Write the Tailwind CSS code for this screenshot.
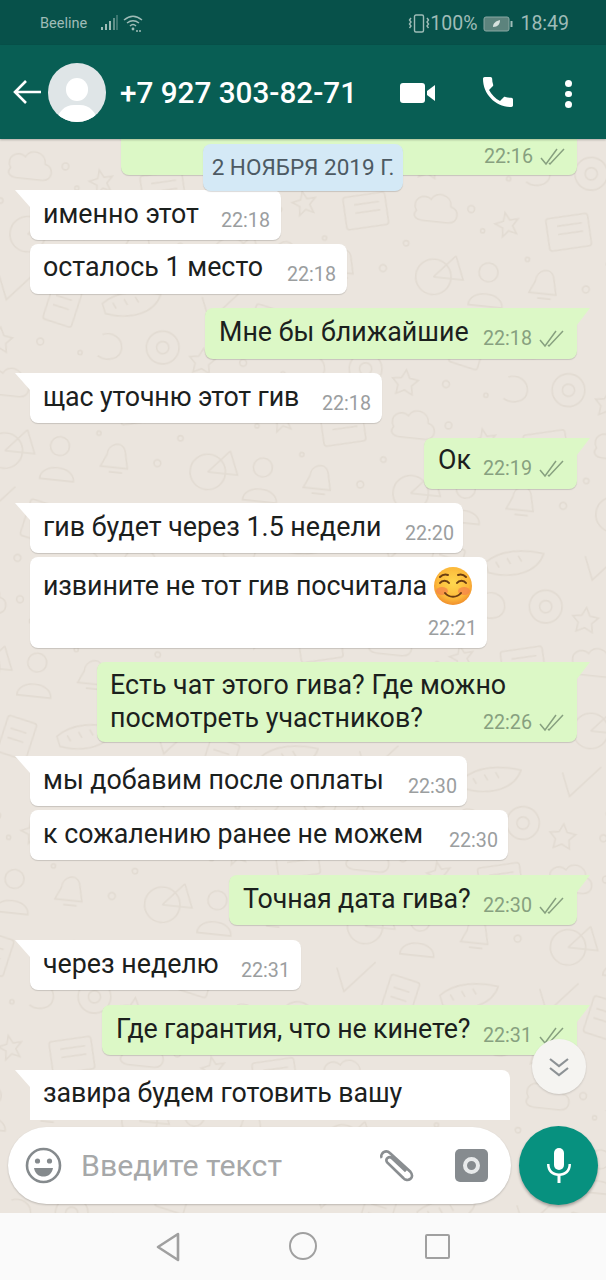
<!DOCTYPE html>
<html><head><meta charset="utf-8">
<script src="https://cdn.jsdelivr.net/npm/@tailwindcss/browser@4"></script>
</head>
<body class="m-0">
<div class="relative flex h-[1280px] w-[606px] flex-col overflow-hidden bg-[#ebe5de] font-['Roboto',sans-serif] text-[26.8px] text-[#1b201d]">

  <!-- doodle wallpaper -->
  <svg class="absolute left-0 top-[139px] h-[1074px] w-[606px]" viewBox="0 0 606 1074" fill="none">
    <defs>
      <pattern id="d" width="300" height="320" patternUnits="userSpaceOnUse" patternTransform="scale(0.68) rotate(6)">
        <g stroke="#e2dbd2" stroke-width="2.400" fill="none">
          <path d="M20 40c-10-14 8-28 20-18 6-14 30-10 30 8 14 2 14 24-2 24H30c-10 0-16-6-10-14z"/>
          <circle cx="100" cy="30" r="5"/><circle cx="120" cy="60" r="3"/><circle cx="10" cy="90" r="4"/>
          <path d="M150 30l8 10 12-3-7 11 7 11-12-3-8 10-1-13-12-5 12-5z"/>
          <rect x="215" y="25" width="62" height="48" rx="4" transform="rotate(-14 246 49)"/>
          <path d="M228 42l36-9M231 54l36-9"/>
          <circle cx="55" cy="135" r="26"/><path d="M55 135l30-34M55 135h44l-14-34"/>
          <circle cx="135" cy="120" r="14"/><path d="M110 170c0-24 50-24 50 0z"/>
          <path d="M205 125c0-16 20-24 26-8l6 26h-40zM210 150h20"/>
          <circle cx="280" cy="130" r="5"/><circle cx="190" cy="95" r="3"/>
          <path d="M20 200l14 34 42-48" />
          <rect x="95" y="205" width="44" height="56" rx="4" transform="rotate(12 117 233)"/>
          <path d="M106 220l24 5M103 234l24 5"/>
          <path d="M175 225c20-22 56-26 84-22-6 28-40 42-78 36z"/><path d="M190 222l6 8M206 215l6 8M222 210l6 8"/>
          <circle cx="270" cy="280" r="24"/><circle cx="270" cy="280" r="9"/>
          <path d="M30 275l6 12 13 2-9 9 2 13-12-6-12 6 2-13-9-9 13-2z"/>
          <circle cx="90" cy="290" r="5"/><circle cx="150" cy="300" r="3"/>
          <path d="M180 270c14-6 30 2 30 18s-20 22-34 14"/>
        </g>
      </pattern>
    </defs>
    <rect width="606" height="1074" fill="url(#d)"/>
  </svg>

  <!-- status bar -->
  <div class="relative flex h-[45px] shrink-0 items-center justify-between bg-[#07514a] pl-[40px] pr-[37px] pt-[2px] text-[#9fbcb7]">
    <div class="flex items-center">
      <span class="text-[14.500px]">Beeline</span>
      <svg class="ml-[14px]" width="42" height="20" viewBox="0 0 42 20" fill="none">
        <g fill="#9fbcb7"><rect x="0" y="13" width="2" height="3"/><rect x="4" y="10" width="2" height="6"/><rect x="8" y="7" width="2" height="9"/><rect x="12" y="4" width="2" height="12" opacity=".6"/><rect x="15" y="1" width="2" height="15" opacity=".35"/></g>
        <g stroke="#9fbcb7" stroke-width="1.500" fill="none"><path d="M23 6c6-5 12-5 18 0"/><path d="M26 9c4-3 8-3 12 0"/><path d="M29 12c2-2 4-2 6 0"/></g>
        <g fill="#9fbcb7"><circle cx="32" cy="15" r="1.400"/><circle cx="36" cy="17" r="1"/><circle cx="39" cy="17" r="1"/></g>
      </svg>
    </div>
    <div class="flex items-center text-[19.500px]">
      <svg width="22" height="20" viewBox="0 0 22 20" fill="none" stroke="#9fbcb7" stroke-width="1.400"><rect x="6.500" y="1" width="9" height="17" rx="1.500"/><path d="M3 4l-1.500 2 1.500 2-1.500 2 1.500 2-1.500 2M19 4l1.500 2-1.500 2 1.500 2-1.500 2 1.500 2"/></svg>
      <span>100%</span>
      <svg class="ml-[6px]" width="30" height="16" viewBox="0 0 30 16"><rect x="1" y="1" width="25" height="14" rx="2" fill="#5c837d" stroke="#8aa9a4"/><rect x="27.500" y="5" width="2" height="6" fill="#9fbcb7"/><path d="M10 11c0-4 3-6 7-7 0 4-2 7-7 7z" fill="#d7e2df"/></svg>
      <span class="ml-[7px]">18:49</span>
    </div>
  </div>

  <!-- header -->
  <div class="relative z-20 flex h-[94px] shrink-0 items-center bg-[#085e54] text-white shadow-[0_1px_2px_rgba(0,0,0,0.25)]">
    <svg class="ml-[13px]" width="28" height="28" viewBox="0 0 28 28" fill="none" stroke="#fff" stroke-width="2.600"><path d="M28 14H2M13 3L2 14l11 11"/></svg>
    <div class="relative ml-[7px] h-[59px] w-[58px] overflow-hidden rounded-full bg-[#dfe5e7]">
      <div class="absolute left-[18px] top-[15px] h-[23px] w-[22px] rounded-full bg-white"></div>
      <div class="absolute left-[9px] top-[42px] h-[34px] w-[40px] rounded-full bg-white"></div>
    </div>
    <span class="ml-[14px] mt-[1px] text-[29.700px] font-medium leading-none">+7 927 303-82-71</span>
    <svg class="absolute left-[400px] top-[38px]" width="36" height="20" viewBox="0 0 36 20" fill="#fff"><rect x="0" y="0" width="25" height="20" rx="3"/><path d="M27 8l8-6v16l-8-6z"/></svg>
    <svg class="absolute left-[478px] top-[27px]" width="40" height="40" viewBox="0 0 24 24" fill="#fff"><path d="M6.620 10.790c1.440 2.830 3.760 5.140 6.590 6.590l2.200-2.200c.27-.27.67-.36 1.020-.24 1.120.37 2.330.57 3.570.57.550 0 1 .45 1 1V20c0 .55-.45 1-1 1C10.610 21 3 13.390 3 4c0-.55.45-1 1-1h3.500c.55 0 1 .45 1 1 0 1.250.2 2.450.57 3.570.11.350.03.740-.25 1.020l-2.200 2.200z"/></svg>
    <div class="absolute left-[565px] top-[35px] flex flex-col gap-[4px]">
      <div class="h-[6.500px] w-[6.500px] rounded-full bg-white"></div><div class="h-[6.500px] w-[6.500px] rounded-full bg-white"></div><div class="h-[6.500px] w-[6.500px] rounded-full bg-white"></div>
    </div>
  </div>

  <!-- messages -->
  <div class="relative h-[981px] shrink-0 overflow-hidden">
    <!-- partially scrolled sent bubble -->
    <div class="flex justify-end pr-[29px]">
      <div class="flex h-[36px] w-[456px] items-end justify-end rounded-b-[8px] bg-[#dcf8c6] pb-[6px] pr-[12px] shadow-[0_1px_1px_rgba(0,0,0,0.15)]">
        <span class="text-[19.700px] leading-[24px] text-[#87a07f]">22:16</span>
        <svg class="mb-[3px] ml-[7px]" width="25" height="18" viewBox="0 0 25 18" fill="none" stroke="#87a07f" stroke-width="1.500"><path d="M1 10l5 6L17 1M9 15l1 1L24 1"/></svg>
      </div>
    </div>

    <!-- received rows -->
    <div class="mt-[15px] flex pl-[30px]">
      <div class="relative flex h-[50px] w-[251px] justify-between rounded-[8px] rounded-tl-none bg-white pl-[13px] pr-[11px] pt-[8px] shadow-[0_1px_1px_rgba(0,0,0,0.15)]">
        <div class="absolute left-[-15px] top-0 h-[17px] w-[15px] bg-white [clip-path:polygon(0_0,100%_0,100%_100%)]"></div>
        <span class="leading-[33px]">именно этот</span><span class="mt-[11px] text-[19.700px] leading-[24px] text-[#9b9e9f]">22:18</span>
      </div>
    </div>
    <div class="mt-[4px] flex pl-[30px]">
      <div class="flex h-[50px] w-[317px] justify-between rounded-[8px] bg-white pl-[13px] pr-[11px] pt-[7px] shadow-[0_1px_1px_rgba(0,0,0,0.15)]">
        <span class="leading-[33px]">осталось 1 место</span><span class="mt-[12px] text-[19.700px] leading-[24px] text-[#9b9e9f]">22:18</span>
      </div>
    </div>

    <!-- sent -->
    <div class="mt-[14px] flex justify-end pr-[29px]">
      <div class="relative flex h-[51px] w-[372px] justify-between rounded-[8px] rounded-tr-none bg-[#dcf8c6] pl-[14px] pr-[13px] pt-[8px] shadow-[0_1px_1px_rgba(0,0,0,0.15)]">
        <div class="absolute right-[-13px] top-0 h-[17px] w-[13px] bg-[#dcf8c6] [clip-path:polygon(0_0,100%_0,0_100%)]"></div>
        <span class="leading-[33px]">Мне бы ближайшие</span>
        <span class="mt-[11px] flex items-start text-[19.700px] leading-[24px] text-[#87a07f]">22:18<svg class="ml-[7px] mt-[3px]" width="25" height="18" viewBox="0 0 25 18" fill="none" stroke="#87a07f" stroke-width="1.500"><path d="M1 10l5 6L17 1M9 15l1 1L24 1"/></svg></span>
      </div>
    </div>

    <div class="mt-[14px] flex pl-[30px]">
      <div class="relative flex h-[50px] w-[352px] justify-between rounded-[8px] rounded-tl-none bg-white pl-[13px] pr-[11px] pt-[8px] shadow-[0_1px_1px_rgba(0,0,0,0.15)]">
        <div class="absolute left-[-15px] top-0 h-[17px] w-[15px] bg-white [clip-path:polygon(0_0,100%_0,100%_100%)]"></div>
        <span class="leading-[33px] tracking-[-0.12px]">щас уточню этот гив</span><span class="mt-[11px] text-[19.700px] leading-[24px] text-[#9b9e9f]">22:18</span>
      </div>
    </div>

    <div class="mt-[15px] flex justify-end pr-[29px]">
      <div class="relative flex h-[51px] w-[153px] justify-between rounded-[8px] rounded-tr-none bg-[#dcf8c6] pl-[14px] pr-[13px] pt-[6px] shadow-[0_1px_1px_rgba(0,0,0,0.15)]">
        <div class="absolute right-[-13px] top-0 h-[17px] w-[13px] bg-[#dcf8c6] [clip-path:polygon(0_0,100%_0,0_100%)]"></div>
        <span class="leading-[33px]">Ок</span>
        <span class="mt-[13px] flex items-start text-[19.700px] leading-[24px] text-[#87a07f]">22:19<svg class="ml-[7px] mt-[3px]" width="25" height="18" viewBox="0 0 25 18" fill="none" stroke="#87a07f" stroke-width="1.500"><path d="M1 10l5 6L17 1M9 15l1 1L24 1"/></svg></span>
      </div>
    </div>

    <div class="mt-[14px] flex pl-[30px]">
      <div class="relative flex h-[50px] w-[433px] justify-between rounded-[8px] rounded-tl-none bg-white pl-[13px] pr-[9px] pt-[8px] shadow-[0_1px_1px_rgba(0,0,0,0.15)]">
        <div class="absolute left-[-15px] top-0 h-[17px] w-[15px] bg-white [clip-path:polygon(0_0,100%_0,100%_100%)]"></div>
        <span class="leading-[33px]">гив будет через 1.5 недели</span><span class="mt-[11px] text-[19.700px] leading-[24px] text-[#9b9e9f]">22:20</span>
      </div>
    </div>
    <div class="mt-[4px] flex pl-[30px]">
      <div class="relative h-[91px] w-[457px] rounded-[8px] bg-white pl-[13px] pt-[9px] shadow-[0_1px_1px_rgba(0,0,0,0.15)]">
        <span class="leading-[33px] tracking-[-0.12px]">извините не тот гив посчитала</span>
        <svg class="absolute left-[403px] top-[9px]" width="40" height="40" viewBox="0 0 40 40">
          <defs><radialGradient id="e" cx="50%" cy="42%" r="60%"><stop offset="0" stop-color="#ffd84f"/><stop offset=".7" stop-color="#fcb83a"/><stop offset="1" stop-color="#ef8a2b"/></radialGradient></defs>
          <circle cx="20" cy="20" r="19" fill="url(#e)"/>
          <ellipse cx="9" cy="25" rx="6" ry="4" fill="#f47c4d" opacity=".65"/><ellipse cx="31" cy="25" rx="6" ry="4" fill="#f47c4d" opacity=".65"/>
          <g fill="none" stroke="#6b3d12" stroke-width="2" stroke-linecap="round"><path d="M7 17c2-3 7-3 9 0M24 17c2-3 7-3 9 0M7 11c2-2 5-3 8-2M33 11c-2-2-5-3-8-2"/><path d="M12 27c4 5 12 5 16 0"/></g>
        </svg>
        <span class="absolute bottom-[7px] right-[10px] text-[19.700px] leading-[24px] text-[#9b9e9f]">22:21</span>
      </div>
    </div>

    <div class="mt-[14px] flex justify-end pr-[29px]">
      <div class="relative h-[80px] w-[480px] rounded-[8px] rounded-tr-none bg-[#dcf8c6] pl-[13px] pt-[7px] shadow-[0_1px_1px_rgba(0,0,0,0.15)]">
        <div class="absolute right-[-13px] top-0 h-[17px] w-[13px] bg-[#dcf8c6] [clip-path:polygon(0_0,100%_0,0_100%)]"></div>
        <div class="leading-[33px]">Есть чат этого гива? Где можно<br>посмотреть участников?</div>
        <span class="absolute bottom-[7px] right-[13px] flex items-start text-[19.700px] leading-[24px] text-[#87a07f]">22:26<svg class="ml-[7px] mt-[3px]" width="25" height="18" viewBox="0 0 25 18" fill="none" stroke="#87a07f" stroke-width="1.500"><path d="M1 10l5 6L17 1M9 15l1 1L24 1"/></svg></span>
      </div>
    </div>

    <div class="mt-[14px] flex pl-[30px]">
      <div class="relative flex h-[50px] w-[437px] justify-between rounded-[8px] rounded-tl-none bg-white pl-[13px] pr-[10px] pt-[8px] shadow-[0_1px_1px_rgba(0,0,0,0.15)]">
        <div class="absolute left-[-15px] top-0 h-[17px] w-[15px] bg-white [clip-path:polygon(0_0,100%_0,100%_100%)]"></div>
        <span class="leading-[33px]">мы добавим после оплаты</span><span class="mt-[11px] text-[19.700px] leading-[24px] text-[#9b9e9f]">22:30</span>
      </div>
    </div>
    <div class="mt-[4px] flex pl-[30px]">
      <div class="flex h-[50px] w-[478px] justify-between rounded-[8px] bg-white pl-[13px] pr-[10px] pt-[8px] shadow-[0_1px_1px_rgba(0,0,0,0.15)]">
        <span class="leading-[33px]">к сожалению ранее не можем</span><span class="mt-[11px] text-[19.700px] leading-[24px] text-[#9b9e9f]">22:30</span>
      </div>
    </div>

    <div class="mt-[15px] flex justify-end pr-[29px]">
      <div class="relative flex h-[50px] w-[348px] justify-between rounded-[8px] rounded-tr-none bg-[#dcf8c6] pl-[14px] pr-[13px] pt-[8px] shadow-[0_1px_1px_rgba(0,0,0,0.15)]">
        <div class="absolute right-[-13px] top-0 h-[17px] w-[13px] bg-[#dcf8c6] [clip-path:polygon(0_0,100%_0,0_100%)]"></div>
        <span class="leading-[33px] tracking-[-0.12px]">Точная дата гива?</span>
        <span class="mt-[11px] flex items-start text-[19.700px] leading-[24px] text-[#87a07f]">22:30<svg class="ml-[7px] mt-[3px]" width="25" height="18" viewBox="0 0 25 18" fill="none" stroke="#87a07f" stroke-width="1.500"><path d="M1 10l5 6L17 1M9 15l1 1L24 1"/></svg></span>
      </div>
    </div>

    <div class="mt-[15px] flex pl-[30px]">
      <div class="relative flex h-[50px] w-[271px] justify-between rounded-[8px] rounded-tl-none bg-white pl-[13px] pr-[11px] pt-[8px] shadow-[0_1px_1px_rgba(0,0,0,0.15)]">
        <div class="absolute left-[-15px] top-0 h-[17px] w-[15px] bg-white [clip-path:polygon(0_0,100%_0,100%_100%)]"></div>
        <span class="leading-[33px]">через неделю</span><span class="mt-[11px] text-[19.700px] leading-[24px] text-[#9b9e9f]">22:31</span>
      </div>
    </div>

    <div class="mt-[15px] flex justify-end pr-[29px]">
      <div class="relative flex h-[50px] w-[475px] justify-between rounded-[8px] rounded-tr-none bg-[#dcf8c6] pl-[14px] pr-[13px] pt-[8px] shadow-[0_1px_1px_rgba(0,0,0,0.15)]">
        <div class="absolute right-[-13px] top-0 h-[17px] w-[13px] bg-[#dcf8c6] [clip-path:polygon(0_0,100%_0,0_100%)]"></div>
        <span class="leading-[33px] tracking-[-0.12px]">Где гарантия, что не кинете?</span>
        <span class="mt-[11px] flex items-start text-[19.700px] leading-[24px] text-[#87a07f]">22:31<svg class="ml-[7px] mt-[3px]" width="25" height="18" viewBox="0 0 25 18" fill="none" stroke="#87a07f" stroke-width="1.500"><path d="M1 10l5 6L17 1M9 15l1 1L24 1"/></svg></span>
      </div>
    </div>

    <div class="mt-[15px] flex pl-[30px]">
      <div class="relative h-[80px] w-[480px] rounded-[8px] rounded-tl-none bg-white pl-[13px] pt-[6px]">
        <div class="absolute left-[-15px] top-0 h-[17px] w-[15px] bg-white [clip-path:polygon(0_0,100%_0,100%_100%)]"></div>
        <div class="leading-[34px] tracking-[-0.1px]">завира будем готовить вашу<br>страницу</div>
      </div>
    </div>

    <!-- date chip -->
    <div class="absolute left-[203px] top-[5px] flex h-[47px] w-[200px] items-center justify-center rounded-[8px] bg-[#d4e9f6] text-[22.500px] text-[#4d5a63] shadow-[0_1px_1px_rgba(0,0,0,0.15)]">2 НОЯБРЯ 2019 Г.</div>

    <!-- scroll-down button -->
    <div class="absolute left-[532px] top-[900px] flex h-[55px] w-[54px] items-center justify-center rounded-full bg-[#f5f4f1] shadow-[0_1px_2px_rgba(0,0,0,0.15)]">
      <svg width="22" height="22" viewBox="0 0 22 22" fill="none" stroke="#8d9295" stroke-width="2.200"><path d="M2 3l9 7 9-7M2 12l9 7 9-7"/></svg>
    </div>
  </div>

  <!-- input row -->
  <div class="relative flex h-[93px] shrink-0 items-start pl-[8px] pt-[7px]">
    <div class="flex h-[77px] w-[503px] items-center rounded-full bg-white shadow-[0_1px_2px_rgba(0,0,0,0.2)]">
      <svg class="ml-[17px]" width="37" height="37" viewBox="0 0 37 37" fill="none"><circle cx="18.500" cy="18.500" r="16.500" stroke="#858a8d" stroke-width="2.600"/><circle cx="12.500" cy="14" r="2.600" fill="#858a8d"/><circle cx="24.500" cy="14" r="2.600" fill="#858a8d"/><path d="M9 21h19c-1 6-5 8.500-9.500 8.500S10 27 9 21z" fill="#858a8d"/></svg>
      <span class="ml-[19px] text-[30.300px] text-[#a6a8a9]">Введите текст</span>
      <svg class="absolute left-[379px] top-[29px]" width="36" height="33" viewBox="0 0 40 37" fill="none" stroke="#8a8e91" stroke-width="3"><path d="M3 10c-1.500-2 0-5 2-6.500 2.500-1.500 5-1 7 1l23 21c2.500 3 2.500 6 0 8s-6 1.500-8-1L9 15c-1.500-2-1-4 .5-5s3.500-1 5 .5L30 25"/></svg>
      <div class="absolute left-[455px] top-[29px] flex h-[33px] w-[33px] items-center justify-center rounded-[5px] bg-[#868b8f]">
        <div class="h-[17px] w-[17px] rounded-full border-[4px] border-[#e8eaeb] bg-[#868b8f]"></div>
      </div>
    </div>
    <div class="absolute left-[519px] top-[6px] flex h-[79px] w-[79px] items-center justify-center rounded-full bg-[#07917f] shadow-[0_2px_3px_rgba(0,0,0,0.3)]">
      <svg width="26" height="36" viewBox="0 0 26 36" fill="#fff"><rect x="8" y="0" width="10" height="22" rx="5"/><path d="M1 16c0 8 5 12 12 12s12-4 12-12h-2.500c0 6-4 9.500-9.500 9.500S3.500 22 3.500 16z"/><rect x="11.500" y="27" width="3" height="8"/></svg>
    </div>
  </div>

  <!-- nav bar -->
  <div class="relative flex h-[67px] shrink-0 items-center bg-[#fafafa]">
    <svg class="absolute left-[155px] top-[19px]" width="26" height="30" viewBox="0 0 26 30" fill="none" stroke="#a0a0a0" stroke-width="2.600" stroke-linejoin="round"><path d="M23 2L3 15l20 13z"/></svg>
    <div class="absolute left-[289px] top-[19px] h-[28px] w-[28px] rounded-full border-[2.500px] border-[#a0a0a0]"></div>
    <div class="absolute left-[425px] top-[21px] h-[25px] w-[25px] rounded-[2px] border-[2.500px] border-[#a0a0a0]"></div>
  </div>
</div>
</body></html>
